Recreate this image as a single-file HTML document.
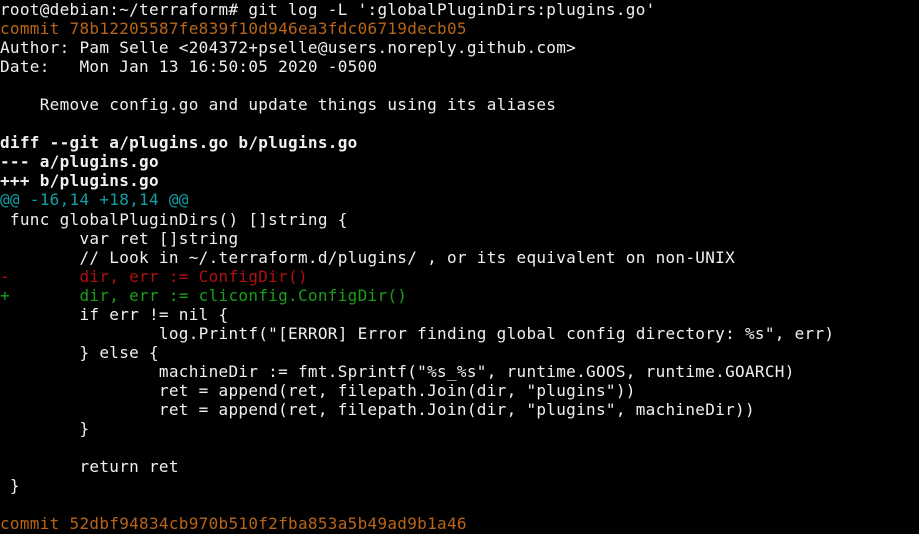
<!DOCTYPE html>
<html><head><meta charset="utf-8"><style>
html,body{margin:0;padding:0;background:#000;width:919px;height:534px;overflow:hidden}
pre{margin:0;position:absolute;top:0px;left:0;font-family:"DejaVu Sans Mono","Liberation Mono",monospace;font-size:16px;line-height:19.05px;letter-spacing:0.3px;color:#f0f0f0}
.o{color:#b8651a}.c{color:#11a0a6}.r{color:#b01010}.g{color:#18a018}b{font-weight:bold}
</style></head><body>
<pre>root@debian:~/terraform# git log -L ':globalPluginDirs:plugins.go'
<span class="o">commit 78b12205587fe839f10d946ea3fdc06719decb05</span>
Author: Pam Selle &lt;204372+pselle@users.noreply.github.com&gt;
Date:   Mon Jan 13 16:50:05 2020 -0500

    Remove config.go and update things using its aliases

<b>diff --git a/plugins.go b/plugins.go</b>
<b>--- a/plugins.go</b>
<b>+++ b/plugins.go</b>
<span class="c">@@ -16,14 +18,14 @@</span>
 func globalPluginDirs() []string {
        var ret []string
        // Look in ~/.terraform.d/plugins/ , or its equivalent on non-UNIX
<span class="r">-       dir, err := ConfigDir()</span>
<span class="g">+       dir, err := cliconfig.ConfigDir()</span>
        if err != nil {
                log.Printf("[ERROR] Error finding global config directory: %s", err)
        } else {
                machineDir := fmt.Sprintf("%s_%s", runtime.GOOS, runtime.GOARCH)
                ret = append(ret, filepath.Join(dir, "plugins"))
                ret = append(ret, filepath.Join(dir, "plugins", machineDir))
        }

        return ret
 }

<span class="o">commit 52dbf94834cb970b510f2fba853a5b49ad9b1a46</span>
</pre>
</body></html>
